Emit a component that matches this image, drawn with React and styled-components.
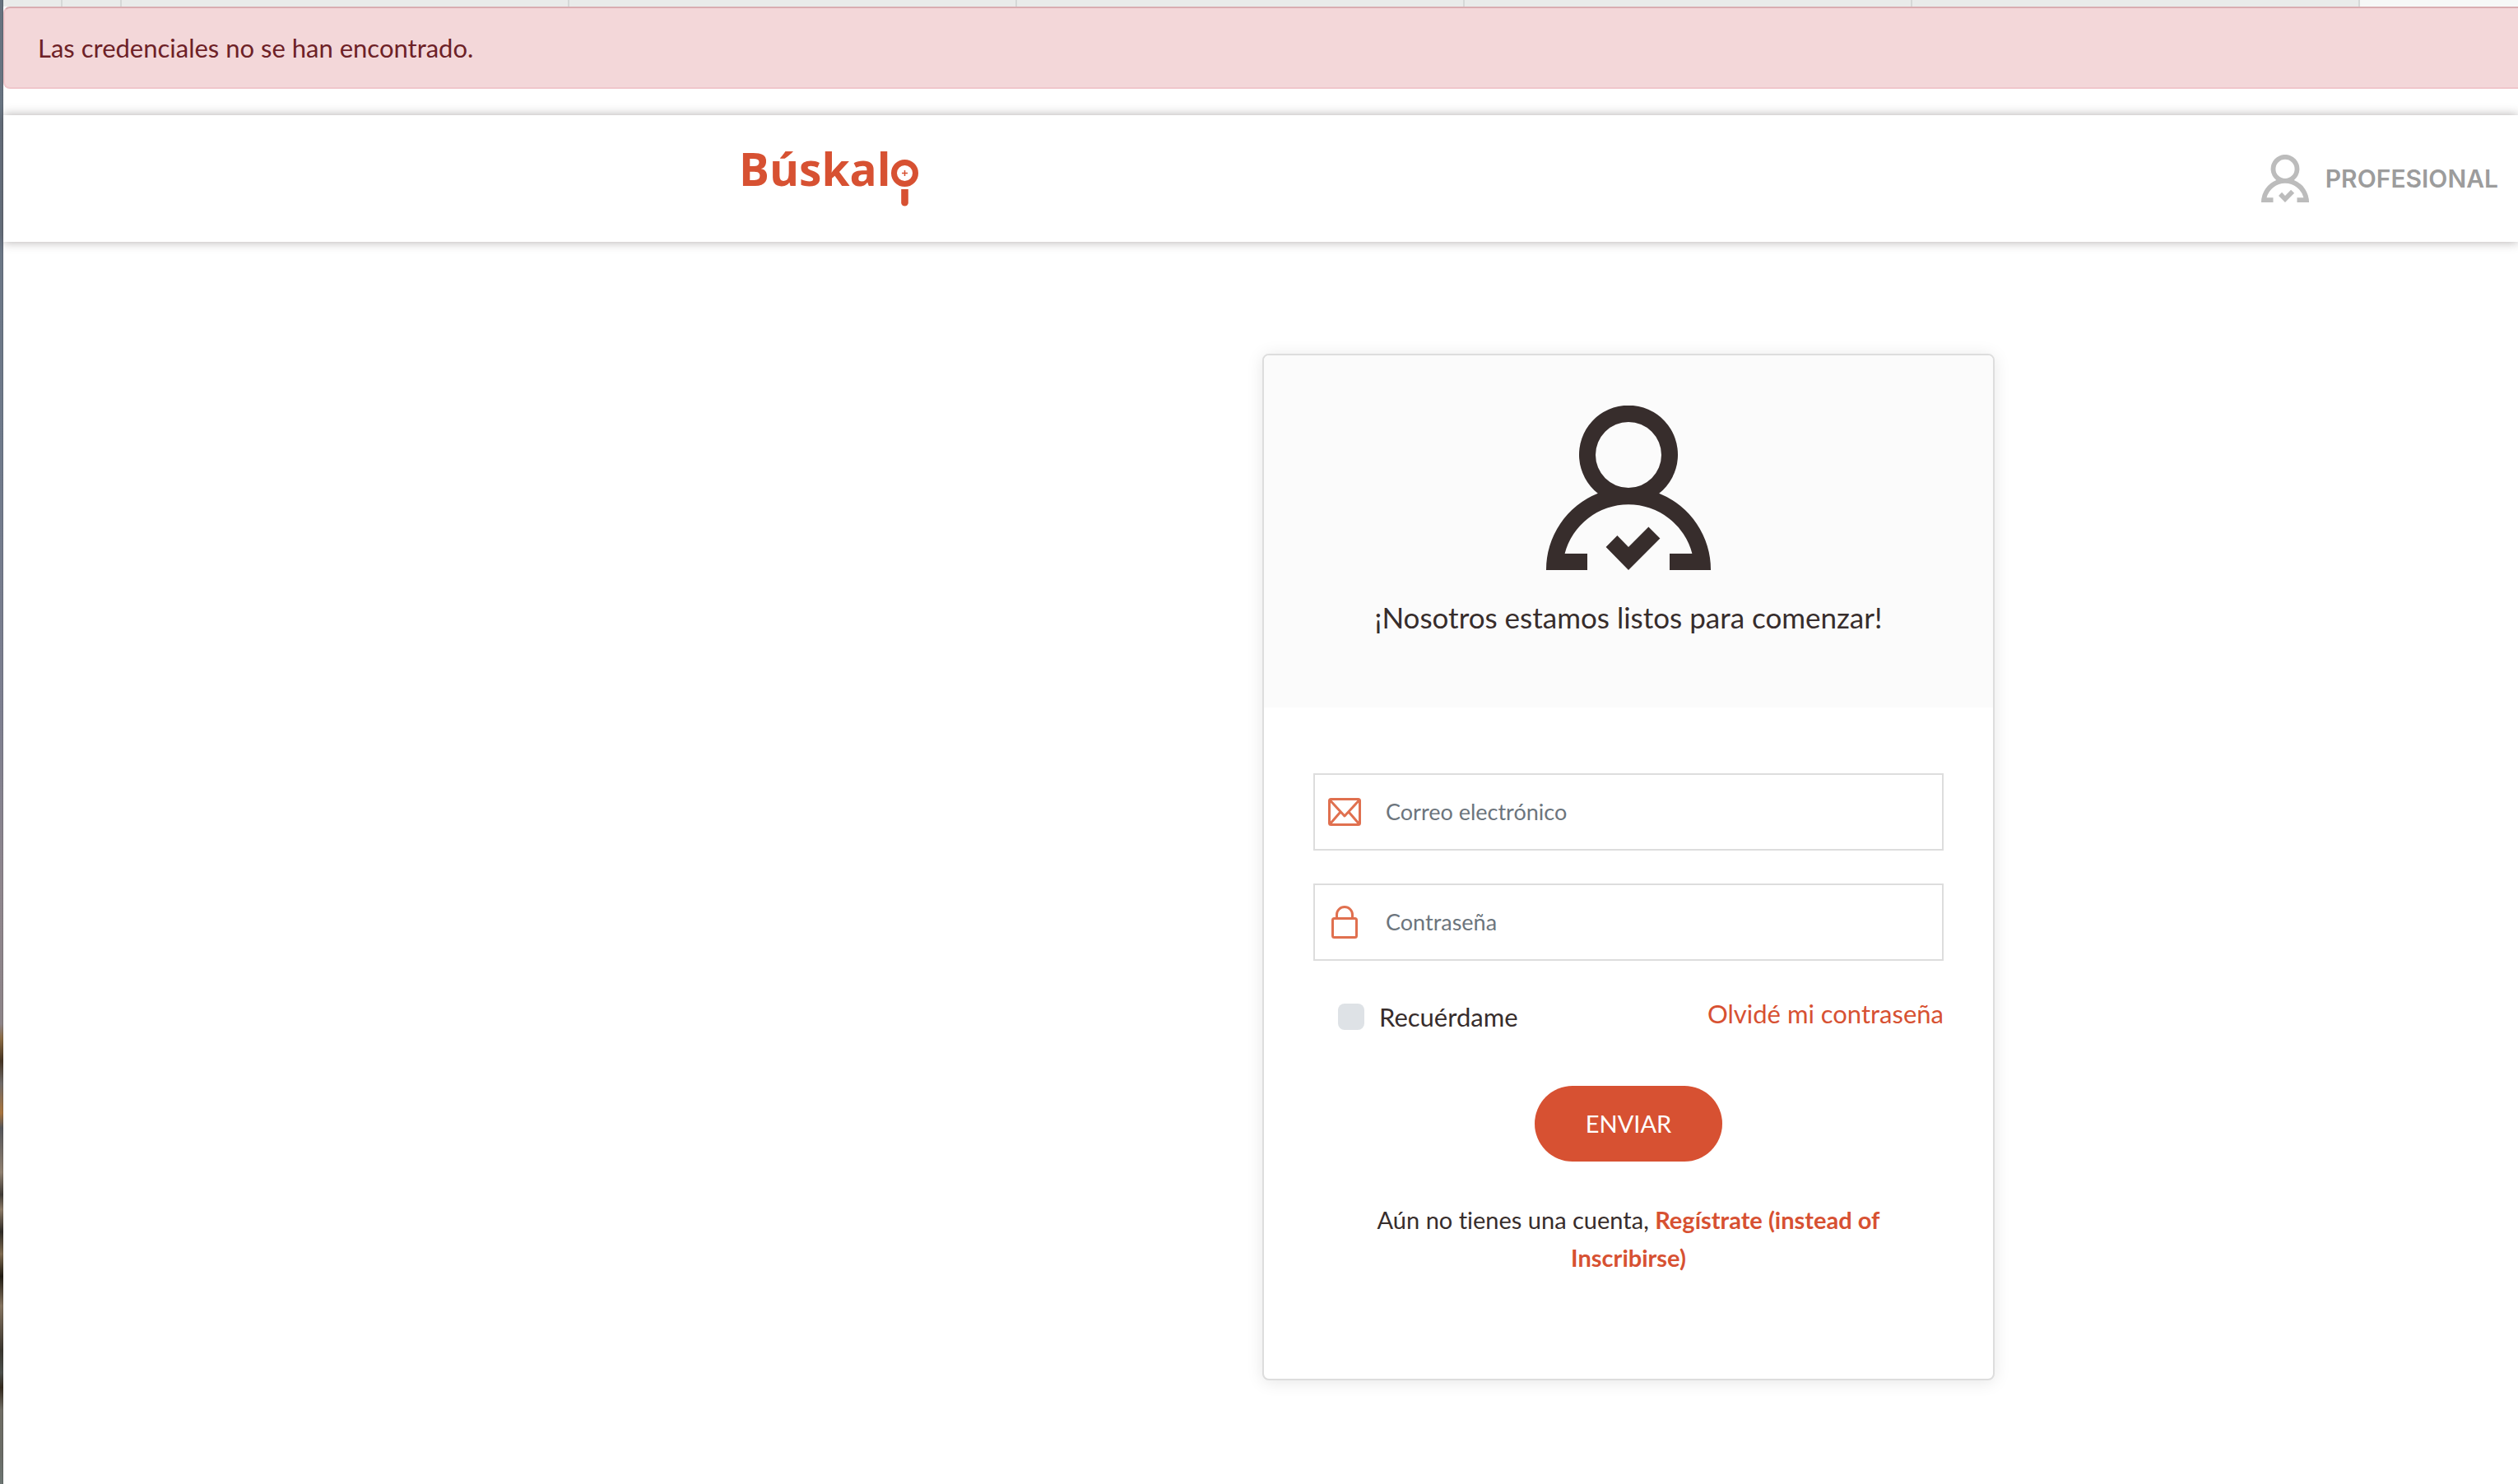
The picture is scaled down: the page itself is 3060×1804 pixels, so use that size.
import React from "react";
import styled, { createGlobalStyle } from "styled-components";

const orange = "#d75132";
const ink = "#372d2c";
const containerLeft = "894px";

const GlobalStyle = createGlobalStyle`
  *, *::before, *::after { box-sizing: border-box; }
  body {
    margin: 0;
    background: #fff;
    color: ${ink};
    font-family: Lato, "Noto Sans", sans-serif;
    font-size: 31px;
    font-variant-ligatures: none;
    line-height: 48px;
  }
`;

const Screen = styled.div`
  display: flex;
  min-height: 100vh;
`;

const Wallpaper = styled.div`
  flex: 0 0 4px;
  border-right: 1px solid rgba(0, 0, 0, 0.15);
  background: linear-gradient(
    #66727f 0,
    #6f7a8b 30%,
    #7d7f90 48%,
    #8f868d 60%,
    #8d8488 69%,
    #8a6a42 70%,
    #453423 71.5%,
    #6f6a68 73%,
    #a9743c 75%,
    #55565a 76%,
    #8f8070 79%,
    #3f3b36 80.5%,
    #8b7a66 81.5%,
    #2e2b26 83%,
    #7e6a50 84.5%,
    #201b12 86%,
    #84735f 88%,
    #3a362f 91%,
    #4b4f4b 92.5%,
    #33291d 93.5%,
    #6f6d64 95%,
    #6a6c66 98%,
    #6d7673 100%
  );
`;

const Main = styled.main`
  flex: 1;
  min-width: 0;
`;

const TabStrip = styled.div`
  display: flex;
  height: 8px;
  background: #f6f8f7;
`;

const Tab = styled.div`
  flex: 0 0 ${(p) => p.$width}px;
  border-right: 2px solid #d5d8d7;
  background: #e9ebea;
`;

const Alert = styled.div`
  height: 100px;
  padding: 24px 40px;
  border: 2px solid #f0c6cb;
  border-top-color: #d9adb1;
  border-right: 0;
  border-radius: 8px 0 0 8px;
  background: #f3d7d9;
  color: #6d2127;
`;

const Header = styled.header`
  display: flex;
  align-items: center;
  justify-content: space-between;
  height: 154px;
  margin-top: 32px;
  padding: 0 24px 0 ${containerLeft};
  background: #fff;
  box-shadow: 0 0 12px rgba(55, 45, 44, 0.4);
`;

const Logo = styled.a`
  display: flex;
  align-items: center;
  padding-bottom: 24px;
  color: ${orange};
  font-family: "Open Sans", sans-serif;
  font-size: 55px;
  font-weight: 700;
  text-decoration: none;
`;

const LogoLens = styled.svg`
  width: 33px;
  height: 92px;
`;

const Professional = styled.a`
  display: flex;
  align-items: center;
  gap: 20px;
  color: #9c9c9c;
  font-family: Inter, sans-serif;
  font-size: 30px;
  font-weight: 600;
  text-decoration: none;
`;

const PersonSvg = styled.svg`
  display: block;
  width: ${(p) => p.$size}px;
  height: ${(p) => p.$size}px;
  fill: ${(p) => p.$color};
`;

const Content = styled.section`
  display: flex;
  justify-content: center;
  padding: 136px 0 126px ${containerLeft};
`;

const Card = styled.div`
  width: 890px;
  overflow: hidden;
  border: 2px solid #ddd;
  border-radius: 8px;
  background: #fff;
  box-shadow: 0 2px 20px rgba(0, 0, 0, 0.1);
`;

const CardTop = styled.div`
  display: flex;
  flex-direction: column;
  align-items: center;
  gap: 30px;
  padding: 61px 60px 83px;
  background: #fbfbfb;
`;

const Title = styled.h1`
  margin: 0;
  font-size: 35px;
  font-weight: 400;
  line-height: 54px;
`;

const Form = styled.form`
  display: flex;
  flex-direction: column;
  padding: 80px 60px 124px;
`;

const Field = styled.label`
  display: flex;
  align-items: center;
  gap: 30px;
  height: 94px;
  margin-bottom: 40px;
  padding: 0 16px;
  border: 2px solid #ddd;
`;

const FieldIcon = styled.svg`
  flex: none;
  width: 40px;
  height: 40px;
  fill: none;
  stroke: #e0704f;
  stroke-width: 3;
  stroke-linejoin: round;
`;

const Input = styled.input`
  flex: 1;
  min-width: 0;
  padding: 0;
  border: 0;
  outline: 0;
  background: transparent;
  color: ${ink};
  font: inherit;
  font-size: 27px;
  &::placeholder { color: #6c757d; opacity: 1; }
`;

const Options = styled.div`
  display: flex;
  align-items: flex-start;
  justify-content: space-between;
`;

const Remember = styled.label`
  display: flex;
  align-items: center;
  gap: 18px;
  padding: 4px 0 0 30px;
`;

const Checkbox = styled.input`
  appearance: none;
  width: 32px;
  height: 32px;
  margin: 0;
  border-radius: 8px;
  background: #dee2e6;
  &:checked { background: ${orange}; }
`;

const Link = styled.a`
  color: ${orange};
  font-weight: ${(p) => (p.$bold ? 700 : 400)};
  text-decoration: none;
`;

const Submit = styled.button`
  align-self: center;
  width: 228px;
  height: 92px;
  margin-top: 60px;
  border: 0;
  border-radius: 46px;
  background: ${orange};
  color: #fff;
  font: inherit;
  font-size: 29px;
`;

const SignUp = styled.p`
  margin: 48px 60px 0;
  font-size: 29px;
  line-height: 46px;
  text-align: center;
`;

function PersonIcon({ size, color }) {
  return (
    <PersonSvg viewBox="0 0 100 100" $size={size} $color={color} aria-hidden="true">
      <path
        fillRule="evenodd"
        d="M31.4 53.4A30 30 0 1 1 68.6 53.4A50 50 0 0 1 100 100H75V90H88.7A40 40 0 0 0 11.3 90H25V100H0A50 50 0 0 1 31.4 53.4ZM50 10A20 20 0 1 0 50 50A20 20 0 1 0 50 10Z"
      />
      <path d="M36.3 86L43.2 79L50 86L62.2 73.8L69.2 80.8L50 100Z" />
    </PersonSvg>
  );
}

export default function App() {
  return (
    <Screen>
      <GlobalStyle />
      <Wallpaper />
      <Main>
        <TabStrip>
          {[72, 72, 544, 544, 544, 544, 544].map((width, i) => (
            <Tab key={i} $width={width} />
          ))}
        </TabStrip>
        <Alert role="alert">Las credenciales no se han encontrado.</Alert>
        <Header>
          <Logo href="#" aria-label="Búskalo">
            Búskal
            <LogoLens viewBox="0 0 33 92" aria-hidden="true">
              <circle cx="16.5" cy="51.5" r="13" fill="none" stroke={orange} strokeWidth="7" />
              <path d="M16.5 48V55M13 51.5H20" stroke={orange} strokeWidth="1.5" />
              <path d="M12.2 71H20.8V87.2A4.3 4.3 0 0 1 12.2 87.2Z" fill={orange} />
            </LogoLens>
          </Logo>
          <Professional href="#">
            <PersonIcon size={58} color="#bcbcbc" />
            PROFESIONAL
          </Professional>
        </Header>
        <Content>
          <Card>
            <CardTop>
              <PersonIcon size={200} color={ink} />
              <Title>¡Nosotros estamos listos para comenzar!</Title>
            </CardTop>
            <Form onSubmit={(e) => e.preventDefault()}>
              <Field>
                <FieldIcon viewBox="0 0 40 40" aria-hidden="true">
                  <rect x="1.5" y="4.5" width="37" height="31" rx="2" />
                  <path d="M2 5.5L20 25L38 5.5M2 35L15 20M38 35L25 20" />
                </FieldIcon>
                <Input type="email" placeholder="Correo electrónico" aria-label="Correo electrónico" />
              </Field>
              <Field>
                <FieldIcon viewBox="0 0 40 40" aria-hidden="true">
                  <rect x="5.5" y="15.5" width="29" height="23" rx="2" />
                  <path d="M10.5 15V11A9.5 9.5 0 0 1 29.5 11V15" />
                </FieldIcon>
                <Input type="password" placeholder="Contraseña" aria-label="Contraseña" />
              </Field>
              <Options>
                <Remember>
                  <Checkbox type="checkbox" />
                  Recuérdame
                </Remember>
                <Link href="#">Olvidé mi contraseña</Link>
              </Options>
              <Submit type="submit">ENVIAR</Submit>
              <SignUp>
                Aún no tienes una cuenta,{" "}
                <Link href="#" $bold>
                  Regístrate (instead of Inscribirse)
                </Link>
              </SignUp>
            </Form>
          </Card>
        </Content>
      </Main>
    </Screen>
  );
}
